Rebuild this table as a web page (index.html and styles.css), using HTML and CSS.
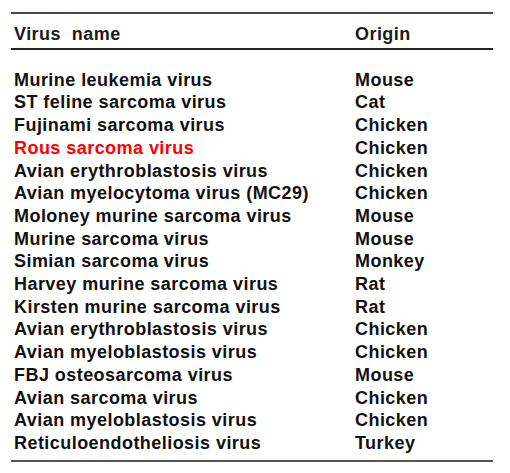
FILE: index.html
```html
<!DOCTYPE html>
<html lang="en">
<head>
    <meta charset="UTF-8">
    <title>Retroviruses</title>
    <link rel="stylesheet" href="styles.css">
</head>
<body>
    <div class="virus-table">
        <div class="head">
            <span>Virus&nbsp; name</span>
            <span>Origin</span>
        </div>
        <div class="rows">
            <div class="row"><span>Murine leukemia virus</span><span>Mouse</span></div>
            <div class="row"><span>ST feline sarcoma virus</span><span>Cat</span></div>
            <div class="row"><span>Fujinami sarcoma virus</span><span>Chicken</span></div>
            <div class="row highlight"><span>Rous sarcoma virus</span><span>Chicken</span></div>
            <div class="row"><span>Avian erythroblastosis virus</span><span>Chicken</span></div>
            <div class="row"><span>Avian myelocytoma virus (MC29)</span><span>Chicken</span></div>
            <div class="row"><span>Moloney murine sarcoma virus</span><span>Mouse</span></div>
            <div class="row"><span>Murine sarcoma virus</span><span>Mouse</span></div>
            <div class="row"><span>Simian sarcoma virus</span><span>Monkey</span></div>
            <div class="row"><span>Harvey murine sarcoma virus</span><span>Rat</span></div>
            <div class="row"><span>Kirsten murine sarcoma virus</span><span>Rat</span></div>
            <div class="row"><span>Avian erythroblastosis virus</span><span>Chicken</span></div>
            <div class="row"><span>Avian myeloblastosis virus</span><span>Chicken</span></div>
            <div class="row"><span>FBJ osteosarcoma virus</span><span>Mouse</span></div>
            <div class="row"><span>Avian sarcoma virus</span><span>Chicken</span></div>
            <div class="row"><span>Avian myeloblastosis virus</span><span>Chicken</span></div>
            <div class="row"><span>Reticuloendotheliosis virus</span><span>Turkey</span></div>
        </div>
    </div>
</body>
</html>
```

FILE: styles.css
```css
body {
    margin: 0;
    background: #fff;
    font-family: 'Liberation Sans', Arial, sans-serif;
}
.virus-table {
    width: 482px;
    margin: 12px 0 0 11px;
    border-top: 2px solid #4a4a4a;
    border-bottom: 2px solid #555;
    font-size: 18px;
    font-weight: bold;
    letter-spacing: 0.45px;
    line-height: 22.7px;
    color: #111;
}
.head,
.row {
    display: grid;
    grid-template-columns: 341px 1fr;
    padding-left: 3px;
}
.head {
    padding-top: 9px;
    padding-bottom: 2px;
    border-bottom: 2px solid #222;
    color: #1a1a1a;
}
.rows {
    padding-top: 19px;
    padding-bottom: 5px;
}
.row.highlight span:first-child {
    color: #f00;
}
```
